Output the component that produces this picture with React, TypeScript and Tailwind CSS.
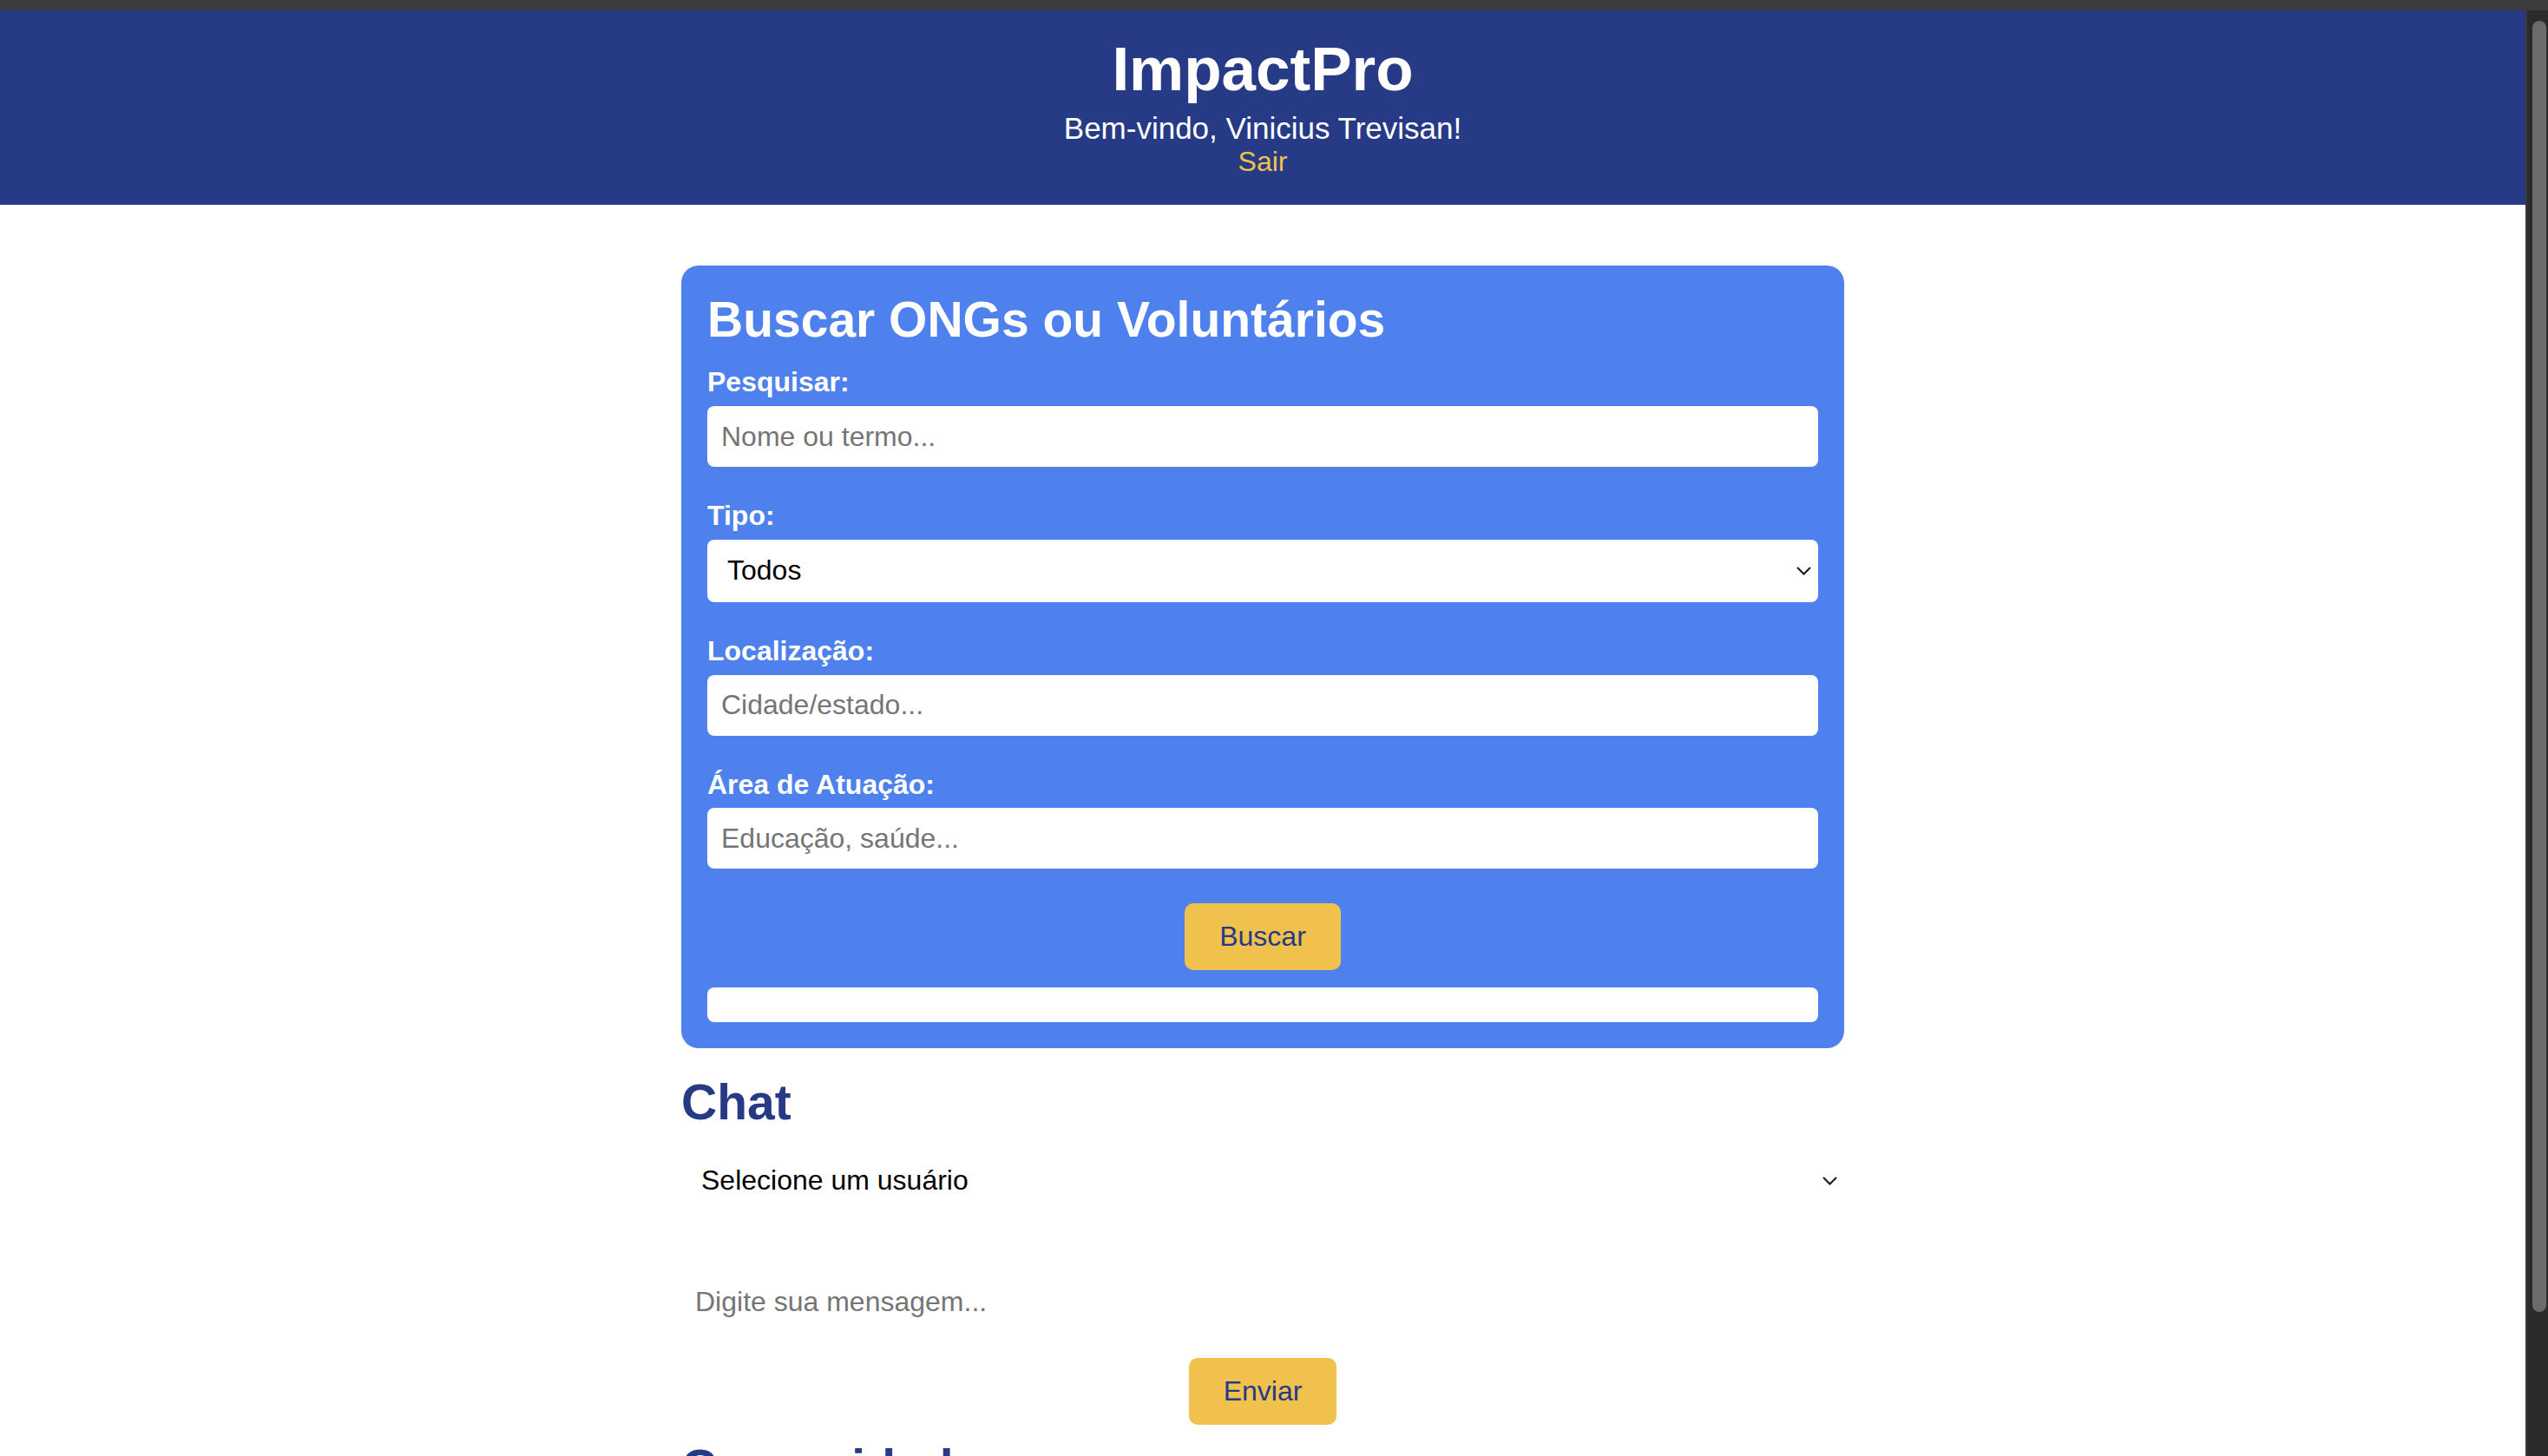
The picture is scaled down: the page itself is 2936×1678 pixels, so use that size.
import type { ReactNode } from 'react';

const fields: { label: string; placeholder: string }[] = [
  { label: 'Localização:', placeholder: 'Cidade/estado...' },
  { label: 'Área de Atuação:', placeholder: 'Educação, saúde...' },
];

const inputCls =
  'block h-[70px] w-full rounded-[8px] bg-white px-[16px] text-[32px] leading-[1.15] text-black outline-none placeholder:text-[#757575]';

function Chevron() {
  return (
    <svg width="17" height="10" viewBox="0 0 17 10" fill="none" className="pointer-events-none absolute right-[8px] top-1/2 -translate-y-1/2">
      <polyline points="1,1 8.5,8.5 16,1" stroke="#1f1f1f" strokeWidth="2.2" />
    </svg>
  );
}

function Select({ children }: { children: ReactNode }) {
  return (
    <div className="relative h-[72px] w-full rounded-[8px] bg-white">
      <select className="h-full w-full appearance-none bg-transparent pl-[23px] pr-[40px] text-[32px] leading-[1.15] text-black outline-none">
        {children}
      </select>
      <Chevron />
    </div>
  );
}

function Label({ children }: { children: ReactNode }) {
  return <label className="mb-[9px] block text-[32px] font-bold leading-[1.15] text-white">{children}</label>;
}

function YellowButton({ children, className = '' }: { children: ReactNode; className?: string }) {
  return (
    <button
      type="button"
      className={`mx-auto block rounded-[10px] bg-[#f1c14e] px-[40px] py-[20px] text-[32px] leading-[1.15] text-[#263a86] ${className}`}
    >
      {children}
    </button>
  );
}

export default function App() {
  return (
    <div className="flex h-[1678px] w-full flex-col overflow-hidden bg-white font-['Liberation_Sans',Arial,sans-serif]">
      <div className="h-[12px] shrink-0 bg-[#3c3c3c]" />

      <div className="flex min-h-0 flex-1">
        <main className="min-w-0 flex-1 overflow-hidden">
          <header className="bg-[#263a86] pb-[31px] pt-[27px] text-center text-white">
            <h1 className="text-[71px] font-bold leading-[1.15]">ImpactPro</h1>
            <p className="mt-[7px] text-[35px] leading-[1.15]">Bem-vindo, Vinicius Trevisan!</p>
            <a href="#" className="block text-[32px] leading-[1.15] text-[#f1c14e]">
              Sair
            </a>
          </header>

          <div className="mx-auto w-[1340px]">
            <section className="mt-[70px] rounded-[20px] bg-[#4e81ee] p-[30px]">
              <h2 className="mb-[21px] text-[57px] font-bold leading-[1.15] text-white">Buscar ONGs ou Voluntários</h2>

              <div>
                <Label>Pesquisar:</Label>
                <input className={inputCls} placeholder="Nome ou termo..." />
              </div>

              <div className="mt-[38px]">
                <Label>Tipo:</Label>
                <Select>
                  <option>Todos</option>
                  <option>ONGs</option>
                  <option>Voluntários</option>
                </Select>
              </div>

              {fields.map((f) => (
                <div key={f.label} className="mt-[38px]">
                  <Label>{f.label}</Label>
                  <input className={inputCls} placeholder={f.placeholder} />
                </div>
              ))}

              <YellowButton className="mt-[40px]">Buscar</YellowButton>

              <div className="mt-[20px] h-[40px] rounded-[8px] bg-white" />
            </section>

            <section className="mt-[30px]">
              <h2 className="mb-[21px] text-[57px] font-bold leading-[1.15] text-[#263a86]">Chat</h2>
              <Select>
                <option>Selecione um usuário</option>
              </Select>
              <input className={`${inputCls} mt-[69px]`} placeholder="Digite sua mensagem..." />
              <YellowButton className="mt-[29px]">Enviar</YellowButton>
            </section>

            <section className="mt-[17px]">
              <h2 className="text-[57px] font-bold leading-[1.15] text-[#263a86]">Comunidades</h2>
            </section>
          </div>
        </main>

        <div className="w-[26px] shrink-0 border-l-2 border-[#3a3a3a] bg-[#2b2b2b] pb-[166px] pl-[6px] pr-[2px] pt-[12px]">
          <div className="h-full rounded-full bg-[#6b6b6b]" />
        </div>
      </div>
    </div>
  );
}
